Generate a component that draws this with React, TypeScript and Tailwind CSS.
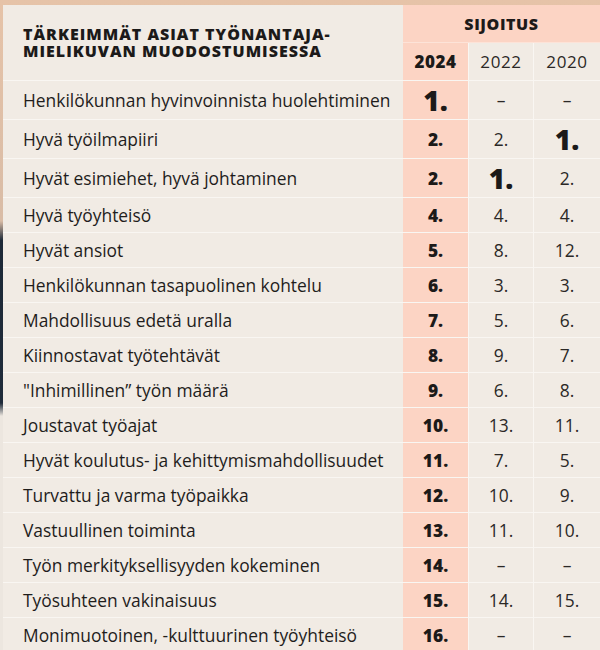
const rows: [string, string, string, string][] = [
  ["Henkilökunnan hyvinvoinnista huolehtiminen", "1.", "–", "–"],
  ["Hyvä työilmapiiri", "2.", "2.", "1."],
  ["Hyvät esimiehet, hyvä johtaminen", "2.", "1.", "2."],
  ["Hyvä työyhteisö", "4.", "4.", "4."],
  ["Hyvät ansiot", "5.", "8.", "12."],
  ["Henkilökunnan tasapuolinen kohtelu", "6.", "3.", "3."],
  ["Mahdollisuus edetä uralla", "7.", "5.", "6."],
  ["Kiinnostavat työtehtävät", "8.", "9.", "7."],
  ["\"Inhimillinen” työn määrä", "9.", "6.", "8."],
  ["Joustavat työajat", "10.", "13.", "11."],
  ["Hyvät koulutus- ja kehittymismahdollisuudet", "11.", "7.", "5."],
  ["Turvattu ja varma työpaikka", "12.", "10.", "9."],
  ["Vastuullinen toiminta", "13.", "11.", "10."],
  ["Työn merkityksellisyyden kokeminen", "14.", "–", "–"],
  ["Työsuhteen vakinaisuus", "15.", "14.", "15."],
  ["Monimuotoinen, -kulttuurinen työyhteisö", "16.", "–", "–"],
];

function Rank({ value, bold }: { value: string; bold?: boolean }) {
  if (value === "1.") {
    return <span className="text-[28px] font-black leading-none text-[#1c1a19]">1.</span>;
  }
  return (
    <span className={bold ? "font-extrabold text-[#1c1a19]" : "font-normal text-[#2b2826]"}>{value}</span>
  );
}

export default function App() {
  return (
    <div className="w-[600px] h-[650px] overflow-hidden pt-[5px] pl-[3px] bg-[linear-gradient(to_bottom,#e6c3a8_0%,#d9bca6_34%,#1d2937_37%,#1f2b3a_62%,#ece6df_64%,#ece6df_100%)]">
      <div
        className="grid grid-cols-[400px_65px_65px_1fr] bg-[#f1ebe4] text-[#1f1d1c] text-[17.4px]"
        style={{ fontFamily: "'Open Sans', 'DejaVu Sans', sans-serif" }}
      >
        <div className="row-span-2 flex items-center pl-5 pt-px border-b border-[#f9f6f2]">
          <h1 className="text-[16px] font-extrabold uppercase leading-[17px] tracking-[1px] text-[#1c1a19]">
            Tärkeimmät asiat työnantaja-
            <br />
            mielikuvan muodostumisessa
          </h1>
        </div>
        <div className="col-span-3 h-[38px] flex items-center justify-center bg-[#fcd4c4] border-b border-[#fde3d8] text-[16px] font-extrabold tracking-[0.6px] text-[#1c1a19]">
          SIJOITUS
        </div>
        <div className="h-[38px] flex items-center justify-center bg-[#fcd4c4] border-b border-[#f9f6f2] text-[17px] font-extrabold tracking-[0.6px] text-[#1c1a19]">
          2024
        </div>
        <div className="h-[38px] flex items-center justify-center border-b border-l border-[#f9f6f2] text-[17px] tracking-[0.6px] text-[#2b2826]">
          2022
        </div>
        <div className="h-[38px] flex items-center justify-center border-b border-l border-[#f9f6f2] text-[17px] tracking-[0.6px] text-[#2b2826]">
          2020
        </div>

        {rows.map(([label, a, b, c], i) => {
          const h = i < 3 ? "h-[39px]" : "h-[35px]";
          return (
            <div key={label} className="contents">
              <div className={`${h} flex items-center pl-5 border-b border-[#f9f6f2]`}>{label}</div>
              <div className={`${h} flex items-center justify-center bg-[#fcd4c4] border-b border-[#f9f6f2]`}>
                <Rank value={a} bold />
              </div>
              <div className={`${h} flex items-center justify-center border-b border-l border-[#f9f6f2]`}>
                <Rank value={b} />
              </div>
              <div className={`${h} flex items-center justify-center border-b border-l border-[#f9f6f2]`}>
                <Rank value={c} />
              </div>
            </div>
          );
        })}
      </div>
    </div>
  );
}
